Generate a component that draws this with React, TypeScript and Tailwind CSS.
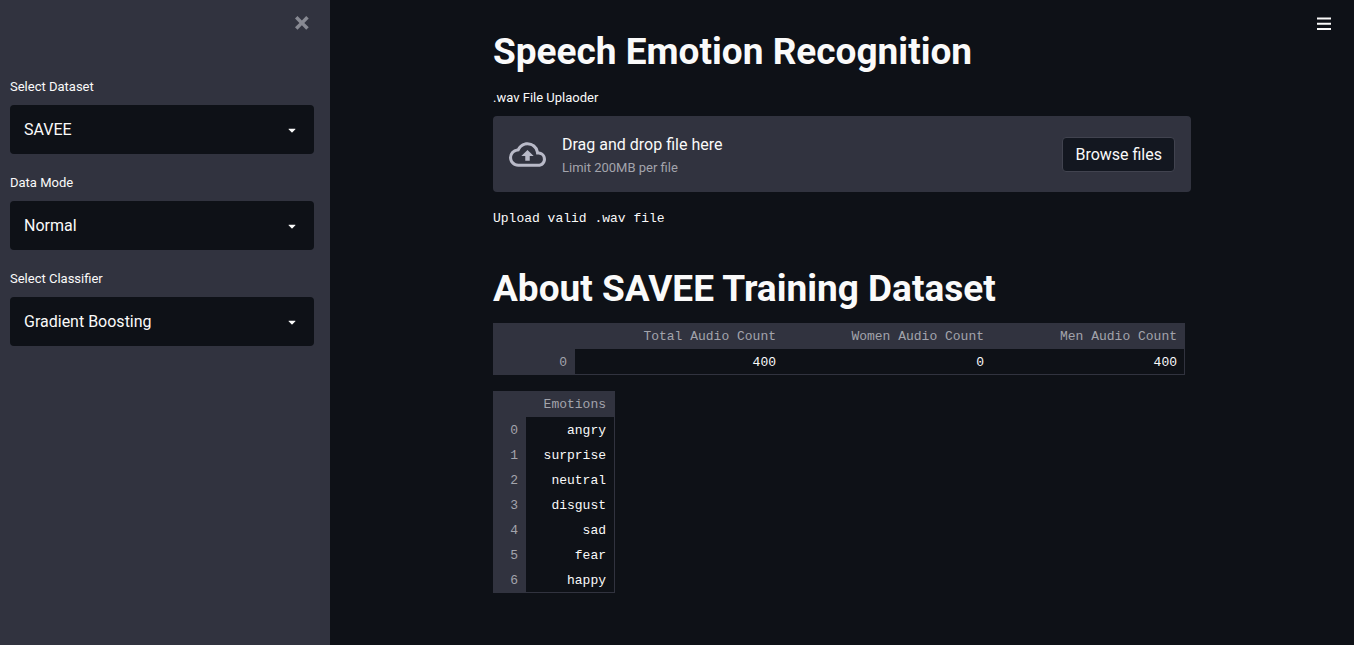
import { useId, useRef, useState } from "react";

const summary = { total: 400, women: 0, men: 400 };
const emotions = ["angry", "surprise", "neutral", "disgust", "sad", "fear", "happy"];

function SelectField({ label, options }: { label: string; options: string[] }) {
  const id = useId();
  const [value, setValue] = useState(options[0]);
  return (
    <div className="flex flex-col gap-2">
      <label htmlFor={id} className="text-[13px] leading-5">
        {label}
      </label>
      <div className="grid items-center">
        <select
          id={id}
          value={value}
          onChange={(e) => setValue(e.target.value)}
          className="col-start-1 row-start-1 h-[49px] w-full appearance-none rounded bg-[#0e1117] pr-10 pl-[14px] text-base text-[#fafafa] outline-none"
        >
          {options.map((o) => (
            <option key={o}>{o}</option>
          ))}
        </select>
        <svg
          viewBox="0 0 24 24"
          aria-hidden="true"
          className="pointer-events-none col-start-1 row-start-1 mr-[14px] size-4 justify-self-end fill-[#fafafa]"
        >
          <path d="M12.7071 15.2929L17.1464 10.8536C17.4614 10.5386 17.2383 10 16.7929 10L7.20711 10C6.76165 10 6.53857 10.5386 6.85355 10.8536L11.2929 15.2929C11.6834 15.6834 12.3166 15.6834 12.7071 15.2929Z" />
        </svg>
      </div>
    </div>
  );
}

function Uploader() {
  const input = useRef<HTMLInputElement>(null);
  return (
    <section className="flex flex-col gap-2">
      <label htmlFor="wav-file" className="text-[13px] leading-5">
        .wav File Uplaoder
      </label>
      <div className="flex items-center rounded bg-[#31333f] px-4 py-[14px]">
        <svg viewBox="0 0 24 24" aria-hidden="true" className="mr-4 size-[37px] shrink-0 fill-[#b9bac8]">
          <path d="M19.35 10.04A7.49 7.49 0 0 0 12 4C9.11 4 6.6 5.64 5.35 8.04A5.994 5.994 0 0 0 0 14c0 3.31 2.69 6 6 6h13c2.76 0 5-2.24 5-5 0-2.64-2.05-4.78-4.65-4.96zM19 18H6c-2.21 0-4-1.79-4-4 0-2.05 1.53-3.76 3.56-3.97l1.07-.11.5-.95A5.469 5.469 0 0 1 12 6c2.62 0 4.88 1.86 5.39 4.43l.3 1.5 1.53.11A2.98 2.98 0 0 1 22 15c0 1.65-1.35 3-3 3zM8 13h2.55v3h2.9v-3H16l-4-4z" />
        </svg>
        <div className="flex flex-1 flex-col gap-px pt-[3px]">
          <span className="text-base leading-6">Drag and drop file here</span>
          <span className="text-[13px] leading-5 text-[#a3a4ac]">Limit 200MB per file</span>
        </div>
        <input ref={input} id="wav-file" type="file" accept=".wav" className="hidden" />
        <button
          type="button"
          onClick={() => input.current?.click()}
          className="h-[35px] rounded border border-[#41434f] bg-[#131720] px-3 pt-0.5 text-base"
        >
          Browse files
        </button>
      </div>
    </section>
  );
}

export default function App() {
  return (
    <div className="flex min-h-screen bg-[#0e1117] font-['Roboto','Liberation_Sans',sans-serif] text-[#fafafa]">
      <aside className="flex w-[330px] shrink-0 flex-col bg-[#31333f] pr-4 pl-[10px]">
        <div className="flex h-[77px] items-start justify-end pt-4 pr-[5px]">
          <button type="button" aria-label="Close sidebar">
            <svg viewBox="0 0 8 8" aria-hidden="true" className="size-[14px] fill-[#878992]">
              <path d="M1.41 0l-1.41 1.41.72.72 1.78 1.81-1.78 1.78-.72.69 1.41 1.44.72-.72 1.81-1.81 1.78 1.81.69.72 1.44-1.44-.72-.69-1.81-1.78 1.81-1.81.72-.72-1.44-1.41-.69.72-1.78 1.78-1.81-1.78-.72-.72z" />
            </svg>
          </button>
        </div>
        <div className="flex flex-col gap-[19px]">
          <SelectField label="Select Dataset" options={["SAVEE"]} />
          <SelectField label="Data Mode" options={["Normal"]} />
          <SelectField label="Select Classifier" options={["Gradient Boosting"]} />
        </div>
      </aside>

      <div className="relative min-w-0 flex-1">
        <button type="button" aria-label="Main menu" className="absolute top-[17px] right-[23px]">
          <svg viewBox="0 0 14 14" aria-hidden="true" className="size-[14px] fill-[#fafafa]">
            <path d="M0 .6h14v1.9H0zM0 5.8h14v1.9H0zM0 11h14v1.9H0z" />
          </svg>
        </button>

        <main className="mx-auto max-w-[730px] px-4 pt-[30px] pb-[51px]">
          <h1 className="mb-[14px] text-[37px] leading-[44px] font-bold">Speech Emotion Recognition</h1>
          <Uploader />
          <p className="mt-[17px] font-['Liberation_Mono',monospace] text-[13px] leading-5">Upload valid .wav file</p>

          <h1 className="mt-[38px] mb-3 text-[37px] leading-[44px] font-bold">About SAVEE Training Dataset</h1>

          <table className="w-full max-w-[692px] table-fixed border-separate border-spacing-0 border-r border-b border-[#31333f] text-right font-['Liberation_Mono',monospace] text-[13px]">
            <colgroup>
              <col className="w-[82px]" />
              <col className="w-[209px]" />
              <col className="w-[208px]" />
              <col />
            </colgroup>
            <thead className="bg-[#31333f] text-[#a3a4ac]">
              <tr className="h-[26px]">
                <td />
                <th scope="col" className="px-2 pt-0.5 text-right font-normal">Total Audio Count</th>
                <th scope="col" className="px-2 pt-0.5 text-right font-normal">Women Audio Count</th>
                <th scope="col" className="pt-0.5 pr-[7px] pl-2 text-right font-normal">Men Audio Count</th>
              </tr>
            </thead>
            <tbody>
              <tr className="h-[25px]">
                <th scope="row" className="bg-[#31333f] px-2 pt-0.5 text-right font-normal text-[#a3a4ac]">0</th>
                <td className="px-2 pt-0.5">{summary.total}</td>
                <td className="px-2 pt-0.5">{summary.women}</td>
                <td className="pt-0.5 pr-[7px] pl-2">{summary.men}</td>
              </tr>
            </tbody>
          </table>

          <table className="mt-4 w-[122px] table-fixed border-separate border-spacing-0 border-r border-b border-[#31333f] text-right font-['Liberation_Mono',monospace] text-[13px]">
            <colgroup>
              <col className="w-[33px]" />
              <col />
            </colgroup>
            <thead className="bg-[#31333f] text-[#a3a4ac]">
              <tr className="h-[26px]">
                <td />
                <th scope="col" className="px-2 pt-0.5 text-right font-normal">Emotions</th>
              </tr>
            </thead>
            <tbody>
              {emotions.map((name, i) => (
                <tr key={name} className="h-[25px]">
                  <th scope="row" className="bg-[#31333f] px-2 pt-0.5 text-right font-normal text-[#a3a4ac]">{i}</th>
                  <td className="px-2 pt-0.5">{name}</td>
                </tr>
              ))}
            </tbody>
          </table>
        </main>
      </div>
    </div>
  );
}
